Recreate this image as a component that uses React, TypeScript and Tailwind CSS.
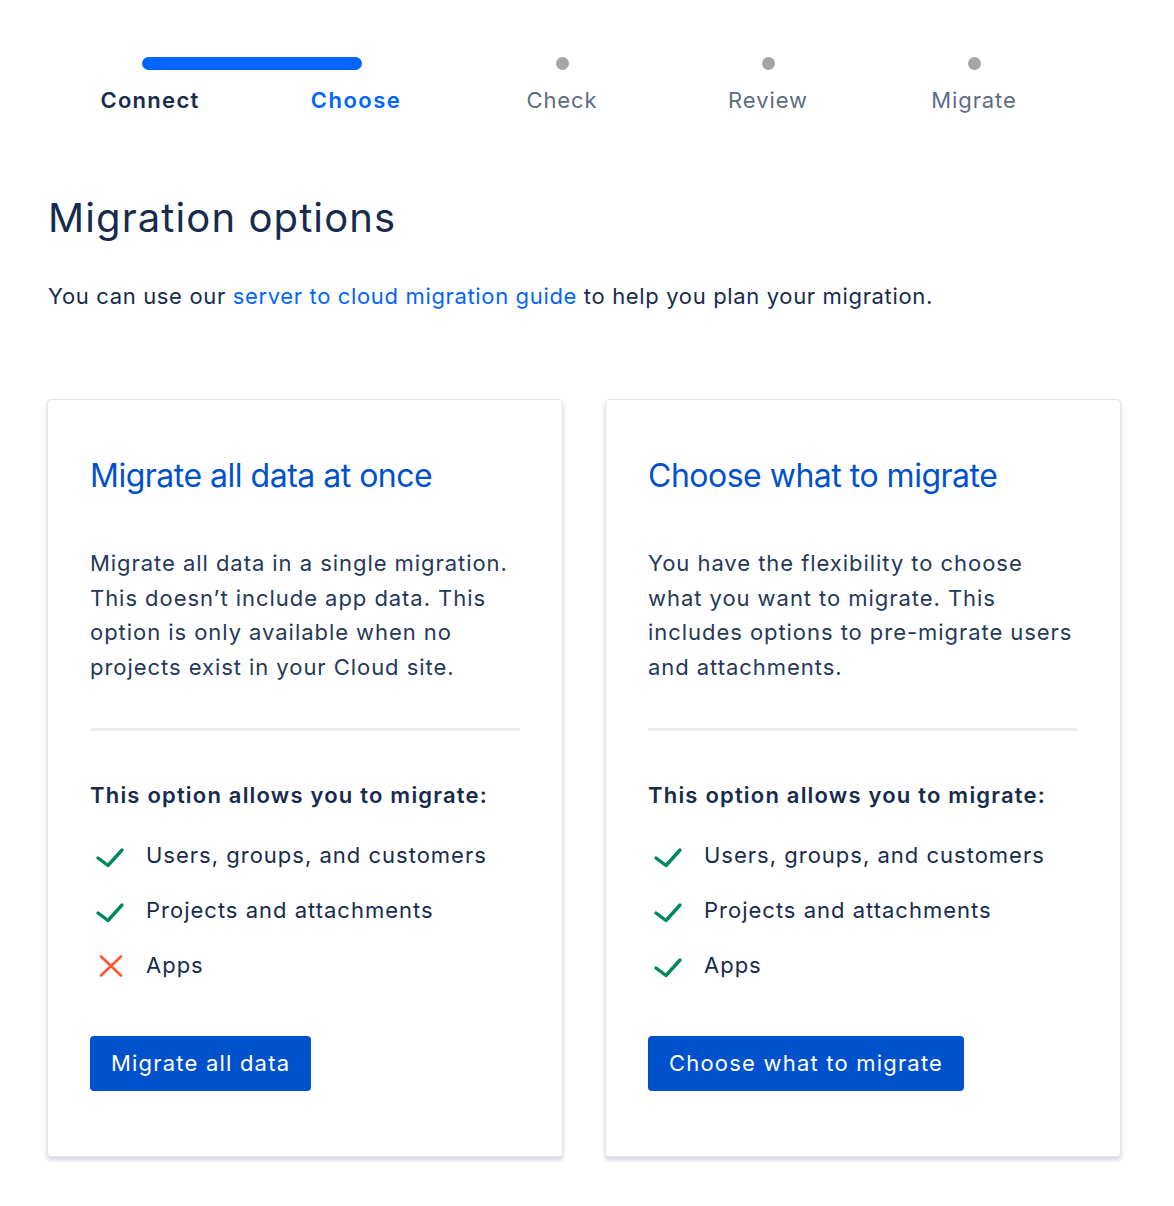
import React from 'react';

const steps = [
  { label: 'Connect', state: 'done' },
  { label: 'Choose', state: 'current' },
  { label: 'Check', state: 'todo' },
  { label: 'Review', state: 'todo' },
  { label: 'Migrate', state: 'todo' },
];

function Check() {
  return (
    <svg width="34" height="34" viewBox="0 0 34 34" fill="none" className="shrink-0">
      <path d="M6 19 L16 26.5 L30 11" stroke="#00875A" strokeWidth="3.4" strokeLinecap="round" strokeLinejoin="round" />
    </svg>
  );
}

function Cross() {
  return (
    <svg width="34" height="34" viewBox="0 0 34 34" fill="none" className="shrink-0">
      <path d="M9 7.5 L29 26.5 M29 7.5 L9 26.5" stroke="#FF5630" strokeWidth="2.6" strokeLinecap="round" />
    </svg>
  );
}

interface OptionCardProps {
  title: string;
  lines: string[];
  items: { label: string; ok: boolean }[];
  button: string;
}

function OptionCard({ title, lines, items, button }: OptionCardProps) {
  return (
    <div className="w-[516px] h-[758px] bg-white border border-[#e4e6ea] rounded-[4px] shadow-[0_3px_4px_rgba(9,30,66,0.18)] px-[42px] pt-[56px]">
      <h2 className="text-[32px] leading-[40px] text-[#0052CC] tracking-[-0.5px]">{title}</h2>
      <p className="mt-[50px] text-[22px] leading-[34.5px] text-[#253858] tracking-[0.95px]">
        {lines.map((l, i) => (
          <span key={i} className="block whitespace-nowrap">{l}</span>
        ))}
      </p>
      <div className="mt-[44px] h-[3px] w-[430px] bg-[#EBECF0]" />
      <h3 className="mt-[48px] text-[22px] leading-[32px] font-semibold text-[#172B4D] tracking-[1.2px]">This option allows you to migrate:</h3>
      <ul className="mt-[17px]">
        {items.map((it) => (
          <li key={it.label} className="h-[55px] flex items-center">
            <span className="ml-[2px]">{it.ok ? <Check /> : <Cross />}</span>
            <span className="ml-[20px] text-[22px] text-[#172B4D] tracking-[1px]">{it.label}</span>
          </li>
        ))}
      </ul>
      <button className="mt-[43px] h-[55px] px-[21px] rounded-[4px] bg-[#0052CC] text-white text-[22px] tracking-[1.2px]">
        {button}
      </button>
    </div>
  );
}

export default function App() {
  return (
    <div className="min-h-[1206px] bg-white font-['Inter',sans-serif] antialiased">
      {/* Stepper */}
      <div className="relative ml-[47px] w-[1030px] pt-[57px] grid grid-cols-5">
        <div className="absolute left-[95px] top-[57px] w-[220px] h-[13px] rounded-full bg-[#0065FF]" />
        {steps.map((s) => (
          <div key={s.label} className="flex flex-col items-center">
            <div className="h-[13px] flex items-center">
              {s.state === 'todo' && <div className="w-[13px] h-[13px] rounded-full bg-[#A5A5A5]" />}
            </div>
            <span
              className={
                'mt-[16px] text-[22px] leading-[28px] ' +
                (s.state === 'done'
                  ? 'font-semibold text-[#172B4D] tracking-[1.3px]'
                  : s.state === 'current'
                  ? 'font-semibold text-[#0065FF] tracking-[1.5px]'
                  : 'text-[#5E6C84] tracking-[0.9px]')
              }
            >
              {s.label}
            </span>
          </div>
        ))}
      </div>

      <div className="pl-[48px]">
        <h1 className="mt-[80px] text-[40px] leading-[48px] text-[#172B4D] tracking-[1.1px]">Migration options</h1>
        <p className="mt-[38px] text-[22px] leading-[32px] text-[#172B4D] tracking-[0.65px]">
          You can use our <a href="#" className="text-[#0065FF]">server to cloud migration guide</a> to help you plan your migration.
        </p>

        <div className="mt-[87px] ml-[-1px] flex gap-[42px]">
          <OptionCard
            title="Migrate all data at once"
            lines={[
              'Migrate all data in a single migration.',
              'This doesn\u2019t include app data. This',
              'option is only available when no',
              'projects exist in your Cloud site.',
            ]}
            items={[
              { label: 'Users, groups, and customers', ok: true },
              { label: 'Projects and attachments', ok: true },
              { label: 'Apps', ok: false },
            ]}
            button="Migrate all data"
          />
          <OptionCard
            title="Choose what to migrate"
            lines={[
              'You have the flexibility to choose',
              'what you want to migrate. This',
              'includes options to pre-migrate users',
              'and attachments.',
            ]}
            items={[
              { label: 'Users, groups, and customers', ok: true },
              { label: 'Projects and attachments', ok: true },
              { label: 'Apps', ok: true },
            ]}
            button="Choose what to migrate"
          />
        </div>
      </div>
    </div>
  );
}
